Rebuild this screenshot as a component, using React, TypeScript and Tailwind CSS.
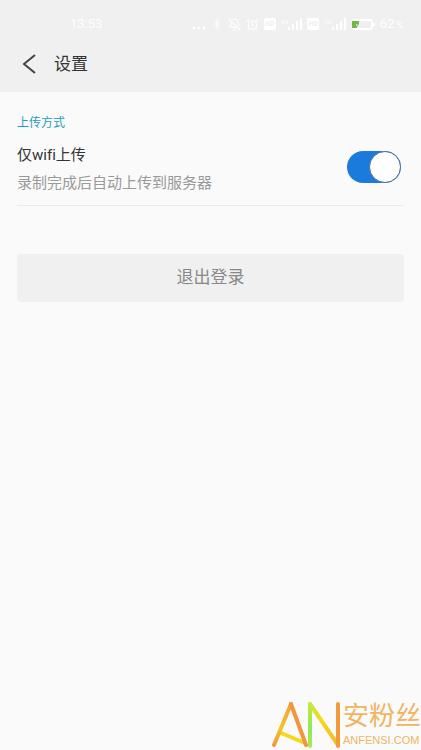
import React, { useState } from 'react';
import { AlarmClock, BellOff, Bluetooth } from 'lucide-react';

const SignalIcon: React.FC<{ label: string }> = ({ label }) => (
  <span className="flex items-end">
    <span className="self-start text-[6px] leading-[8px]">{label}</span>
    <svg width="14" height="12" viewBox="0 0 14 12" fill="currentColor" aria-hidden="true">
      <rect x="0" y="9" width="2" height="3" />
      <rect x="4" y="6" width="2" height="6" />
      <rect x="8" y="3" width="2" height="9" />
      <rect x="12" y="0" width="2" height="12" />
    </svg>
  </span>
);

const HdBadge: React.FC = () => (
  <span className="w-3 h-3 rounded-xs bg-white text-center text-[7px] leading-3 font-bold text-[#f0f0f0]">HD</span>
);

const BatteryIcon: React.FC = () => (
  <svg width="24" height="11" viewBox="0 0 24 11" fill="none" aria-hidden="true">
    <rect x="2" y="1" width="19" height="9" rx="2" stroke="#fff" strokeWidth="2" />
    <rect x="22" y="4" width="2" height="3" fill="#fff" />
    <path d="M1 2h7v3L6 8v1H1z" fill="#73b648" />
    <path d="M5 5h2L5 8z" fill="#c8e4b5" />
  </svg>
);

const StatusBar: React.FC = () => (
  <div className="flex h-9 items-center justify-between pt-3 pl-[70px] pr-[18px] text-white">
    <span className="text-[13px] leading-4">13:53</span>
    <div className="flex items-center gap-[5px]">
      <svg width="14" height="12" viewBox="0 0 14 12" fill="currentColor" aria-hidden="true">
        <circle cx="2" cy="10" r="1.5" />
        <circle cx="7" cy="10" r="1.5" />
        <circle cx="12" cy="10" r="1.5" />
      </svg>
      <Bluetooth size={12} />
      <BellOff size={13} />
      <AlarmClock size={13} />
      <HdBadge />
      <SignalIcon label="4G" />
      <HdBadge />
      <SignalIcon label="3G" />
      <BatteryIcon />
      <span className="flex items-baseline gap-[2px] text-[13px] leading-4">
        62<span className="text-[9px]">%</span>
      </span>
    </div>
  </div>
);

const SiteLogo: React.FC = () => (
  <div className="flex items-end justify-end">
    <svg width="72" height="48" viewBox="0 0 72 48" fill="none" strokeWidth="4" aria-hidden="true">
      <defs>
        <linearGradient id="leftLeg" x1="0" y1="0" x2="0" y2="1">
          <stop offset="0" stopColor="#f5a03c" />
          <stop offset="0.6" stopColor="#f4c42c" />
          <stop offset="1" stopColor="#f09a3a" />
        </linearGradient>
        <linearGradient id="greenBar" gradientUnits="userSpaceOnUse" x1="0" y1="1" x2="0" y2="45">
          <stop offset="0" stopColor="#c6ea3c" />
          <stop offset="0.6" stopColor="#8fe858" />
          <stop offset="1" stopColor="#a8ea50" />
        </linearGradient>
        <linearGradient id="diagonal" x1="0" y1="0" x2="1" y2="1">
          <stop offset="0" stopColor="#c6e83a" />
          <stop offset="0.4" stopColor="#f6d818" />
          <stop offset="1" stopColor="#f4b92c" />
        </linearGradient>
      </defs>
      <g strokeLinecap="round">
        <path d="M10 31L34 41" stroke="#f5d71c" />
        <path d="M20 2L3 43" stroke="url(#leftLeg)" />
        <path d="M20 2L35 43" stroke="#f2953c" />
        <path d="M39 2L67 43" stroke="url(#diagonal)" />
        <path d="M39 2V44" stroke="url(#greenBar)" />
        <path d="M67 2V44" stroke="#f29a3a" />
      </g>
    </svg>
    <div className="flex flex-col text-[#f0b562]">
      <span className="text-[26px] leading-7">安粉丝</span>
      <span className="font-['Liberation_Sans',sans-serif] text-[11px] leading-5">ANFENSI.COM</span>
    </div>
  </div>
);

export default function App() {
  const [wifiOnly, setWifiOnly] = useState(true);

  return (
    <div className="flex min-h-screen flex-col bg-[#fafafa] font-['Roboto','Noto_Sans_CJK_SC',sans-serif]">
      <header className="bg-[#f0f0f0]">
        <StatusBar />
        <div className="flex h-14 items-center gap-4 pl-5">
          <button type="button" aria-label="返回" className="text-[#444]">
            <svg width="18" height="20" viewBox="0 0 18 20" fill="none" stroke="currentColor" strokeWidth="2">
              <path d="M15 1L4 10l11 9" />
            </svg>
          </button>
          <h1 className="text-[17px] leading-6 text-[#333]">设置</h1>
        </div>
      </header>

      <main className="flex flex-1 flex-col px-[17px] pt-[21px]">
        <h2 className="text-[12px] leading-5 text-[#1c9dbf]">上传方式</h2>
        <div className="flex items-center justify-between border-b border-[#ebebeb] pt-1 pr-[3px] pb-2">
          <label htmlFor="wifi-only" className="flex flex-col pt-1 text-[15px] [font-variant-ligatures:none]">
            <span className="leading-7 text-[#333]">仅wifi上传</span>
            <span className="leading-7 text-[#999]">录制完成后自动上传到服务器</span>
          </label>
          <input
            id="wifi-only"
            type="checkbox"
            role="switch"
            checked={wifiOnly}
            onChange={(e) => setWifiOnly(e.target.checked)}
            className="h-8 w-[54px] appearance-none rounded-full bg-[#ccc] before:block before:size-8 before:rounded-full before:border before:border-[#4c7197] before:bg-white checked:bg-[#1a7bdc] checked:before:ml-auto"
          />
        </div>
        <button type="button" className="mt-12 h-12 rounded bg-[#f0f0f0] text-[17px] text-[#888]">
          退出登录
        </button>
      </main>

      <footer>
        <SiteLogo />
      </footer>
    </div>
  );
}
